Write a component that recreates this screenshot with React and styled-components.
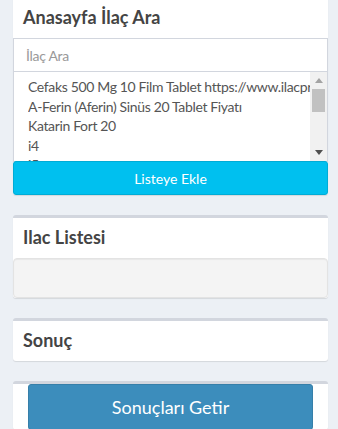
import React from "react";
import styled, { createGlobalStyle } from "styled-components";

const Global = createGlobalStyle`
  html, body { margin: 0; padding: 0; background: #ecf0f5; }
  body { font-family: Lato, "Noto Sans", sans-serif; color: #333; font-size: 14px; }
  * { box-sizing: border-box; }
`;

const Page = styled.div`
  padding: 0 10px 0 13px;
  margin-top: -5px;
  display: flex;
  flex-direction: column;
  gap: 20px;
`;

const Box = styled.section`
  background: #fff;
  border-top: 3px solid #d2d6de;
  border-radius: 3px;
  box-shadow: 0 1px 1px rgba(0, 0, 0, 0.1);
  display: flex;
  flex-direction: column;
`;

const Header = styled.div`
  height: 40px;
  padding: 10px 10px;
  display: flex;
  align-items: center;
`;

const Title = styled.h3`
  margin: 0;
  font-size: 18px;
  font-weight: 700;
  color: #444;
  line-height: 1.1;
`;

const Input = styled.input`
  display: block;
  width: 100%;
  height: 34px;
  padding: 6px 12px;
  border: 1px solid #d2d6de;
  font: inherit;
  font-size: 14px;
  letter-spacing: -0.3px;
  color: #555;
  outline: none;
  &::placeholder { color: #999; }
`;

const ListBox = styled.div`
  height: 90px;
  border: 1px solid #d2d6de;
  border-top: none;
  display: flex;
  overflow: hidden;
`;

const Options = styled.div`
  flex: 1;
  min-width: 0;
  padding: 5px 0 0 14px;
  overflow: hidden;
`;

const Option = styled.div`
  white-space: nowrap;
  overflow: hidden;
  color: #555;
  font-size: 14px;
  letter-spacing: -0.35px;
  line-height: 19.5px;
`;

const Track = styled.div`
  width: 17px;
  background: #f1f1f1;
  display: flex;
  flex-direction: column;
  align-items: center;
`;

const Arrow = styled.div`
  height: 17px;
  width: 17px;
  display: flex;
  align-items: center;
  justify-content: center;
`;

const Thumb = styled.div`
  width: 13px;
  height: 23px;
  background: #c1c1c1;
`;

const Spacer = styled.div`
  flex: 1;
`;

const Button = styled.button`
  display: block;
  font: inherit;
  color: #fff;
  border-radius: 3px;
  cursor: pointer;
  background: ${(p) => p.$bg};
  border: 1px solid ${(p) => p.$border};
  font-size: ${(p) => (p.$lg ? "18px" : "14px")};
  height: ${(p) => (p.$lg ? "46px" : "34px")};
  margin: ${(p) => (p.$lg ? "0 15px" : "0")};
  margin-top: ${(p) => (p.$lg ? "0" : "-1px")};
`;

const Well = styled.div`
  height: 40px;
  background: #f4f4f4;
  border: 1px solid #e3e3e3;
  border-radius: 4px;
  box-shadow: inset 0 1px 1px rgba(0, 0, 0, 0.05);
`;

const items = [
  "Cefaks 500 Mg 10 Film Tablet https://www.ilacprospektusu.com",
  "A-Ferin (Aferin) Sinüs 20 Tablet Fiyatı",
  "Katarin Fort 20",
  "i4",
  "i5",
];

export default function App() {
  return (
    <>
      <Global />
      <Page>
        <Box>
          <Header>
            <Title>Anasayfa İlaç Ara</Title>
          </Header>
          <Input placeholder="İlaç Ara" />
          <ListBox>
            <Options>
              {items.map((t) => (
                <Option key={t}>{t}</Option>
              ))}
            </Options>
            <Track>
              <Arrow>
                <svg width="8" height="5" viewBox="0 0 8 5">
                  <path d="M0 5 L4 0 L8 5 Z" fill="#a3a3a3" />
                </svg>
              </Arrow>
              <Thumb />
              <Spacer />
              <Arrow>
                <svg width="8" height="5" viewBox="0 0 8 5">
                  <path d="M0 0 L4 5 L8 0 Z" fill="#505050" />
                </svg>
              </Arrow>
            </Track>
          </ListBox>
          <Button $bg="#00c0ef" $border="#00acd6">Listeye Ekle</Button>
        </Box>
        <Box>
          <Header>
            <Title>Ilac Listesi</Title>
          </Header>
          <Well />
        </Box>
        <Box>
          <Header>
            <Title>Sonuç</Title>
          </Header>
        </Box>
        <Box>
          <Button $lg $bg="#3c8dbc" $border="#367fa9">Sonuçları Getir</Button>
        </Box>
      </Page>
    </>
  );
}
